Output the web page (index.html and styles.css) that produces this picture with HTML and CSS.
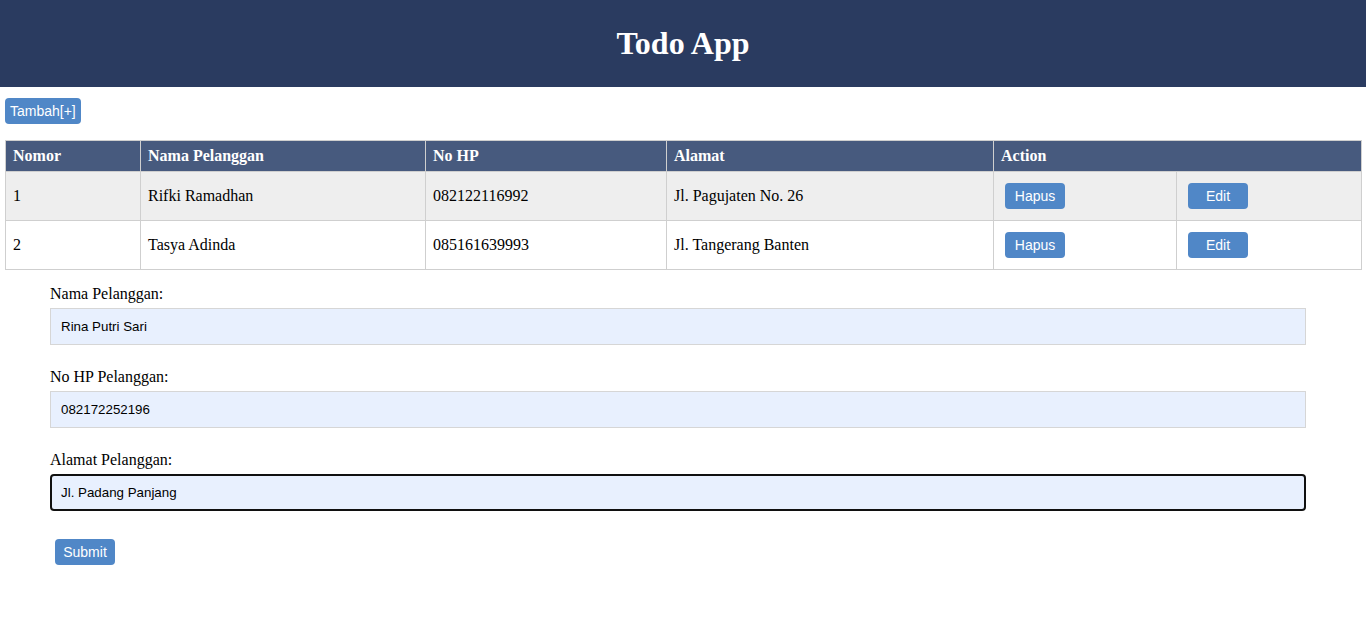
FILE: index.html
```html
<!DOCTYPE html>
<html>
<head>
<meta charset="utf-8">
<title>Todo App</title>
<link rel="stylesheet" href="styles.css">
</head>
<body>
<header class="topbar"><h1 class="title">Todo App</h1></header>
<main class="content">
  <div class="toolbar"><button class="btn btn-add">Tambah[+]</button></div>
  <table class="grid">
    <colgroup>
      <col class="c-no"><col class="c-nama"><col class="c-hp"><col class="c-alamat"><col class="c-act"><col class="c-act2">
    </colgroup>
    <thead>
      <tr><th>Nomor</th><th>Nama Pelanggan</th><th>No HP</th><th>Alamat</th><th colspan="2">Action</th></tr>
    </thead>
    <tbody>
      <tr class="odd"><td>1</td><td>Rifki Ramadhan</td><td>082122116992</td><td>Jl. Pagujaten No. 26</td><td><button class="btn btn-row">Hapus</button></td><td><button class="btn btn-row">Edit</button></td></tr>
      <tr><td>2</td><td>Tasya Adinda</td><td>085161639993</td><td>Jl. Tangerang Banten</td><td><button class="btn btn-row">Hapus</button></td><td><button class="btn btn-row">Edit</button></td></tr>
    </tbody>
  </table>
  <form class="form">
    <div class="field">
      <label class="label">Nama Pelanggan:</label>
      <input class="input" type="text" value="Rina Putri Sari">
    </div>
    <div class="field">
      <label class="label">No HP Pelanggan:</label>
      <input class="input" type="text" value="082172252196">
    </div>
    <div class="field">
      <label class="label">Alamat Pelanggan:</label>
      <input class="input input-focus" type="text" value="Jl. Padang Panjang">
    </div>
    <button class="btn btn-submit" type="button">Submit</button>
  </form>
</main>
</body>
</html>
```
FILE: styles.css
```css
html, body { margin: 0; padding: 0; background: #fff; }
body { font-family: "Liberation Serif", "Times New Roman", serif; font-size: 16px; color: #000; }

.topbar {
  height: 87px;
  background: #2a3b60;
  display: flex;
  align-items: center;
  justify-content: center;
}
.title {
  margin: 0;
  color: #fff;
  font-size: 32px;
  font-weight: bold;
  line-height: 37px;
}

.content { padding: 0 5px; }

.toolbar { padding-top: 11px; height: 26px; margin-bottom: 16px; }

.btn {
  font-family: "Liberation Sans", Arial, sans-serif;
  font-size: 14px;
  color: #fff;
  background: #5087c7;
  border: none;
  border-radius: 4px;
  height: 26px;
  line-height: 26px;
  padding: 0 5px;
  cursor: pointer;
}
.btn-add { padding: 0 5px; }
.btn-row { width: 60px; margin: 4px; padding: 0; }
.btn-submit { width: 60px; margin: 5px; padding: 0; }

.grid {
  width: 1356px;
  border-collapse: collapse;
  table-layout: fixed;
}
.c-no { width: 135px; }
.c-nama { width: 285px; }
.c-hp { width: 241px; }
.c-alamat { width: 327px; }
.c-act { width: 183px; }
.c-act2 { width: 185px; }

.grid th, .grid td {
  border: 1px solid #cfcfcf;
  text-align: left;
}
.grid th {
  background: #475a7e;
  color: #fff;
  font-weight: bold;
  padding: 6px 7px;
  line-height: 18px;
}
.grid td {
  padding: 7px;
  line-height: 18px;
  vertical-align: middle;
}
.grid tr.odd td { background: #eeeeee; }

.form {
  padding: 15px 55px 0 45px;
}
.field { margin-bottom: 23px; }
.label { display: block; line-height: 18px; margin-bottom: 5px; }
.input {
  display: block;
  box-sizing: border-box;
  width: 100%;
  height: 37px;
  padding: 0 10px;
  background: #e8f0fe;
  border: 1px solid #d6d6d6;
  font-family: "Liberation Sans", Arial, sans-serif;
  font-size: 13.33px;
  color: #000;
  outline: none;
}
.input-focus {
  border: 2px solid #101010;
  border-radius: 4px;
  padding: 0 9px;
}
```
